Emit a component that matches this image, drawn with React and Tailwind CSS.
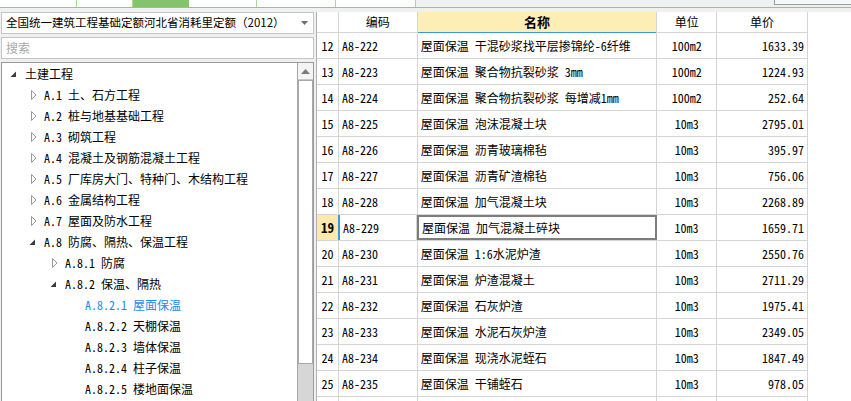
import React from "react";

const rows = [
  [12, "A8-222", "屋面保温 干混砂浆找平层掺锦纶-6纤维", "100m2", "1633.39"],
  [13, "A8-223", "屋面保温 聚合物抗裂砂浆 3mm", "100m2", "1224.93"],
  [14, "A8-224", "屋面保温 聚合物抗裂砂浆 每增减1mm", "100m2", "252.64"],
  [15, "A8-225", "屋面保温 泡沫混凝土块", "10m3", "2795.01"],
  [16, "A8-226", "屋面保温 沥青玻璃棉毡", "10m3", "395.97"],
  [17, "A8-227", "屋面保温 沥青矿渣棉毡", "10m3", "756.06"],
  [18, "A8-228", "屋面保温 加气混凝土块", "10m3", "2268.89"],
  [19, "A8-229", "屋面保温 加气混凝土碎块", "10m3", "1659.71"],
  [20, "A8-230", "屋面保温 1:6水泥炉渣", "10m3", "2550.76"],
  [21, "A8-231", "屋面保温 炉渣混凝土", "10m3", "2711.29"],
  [22, "A8-232", "屋面保温 石灰炉渣", "10m3", "1975.41"],
  [23, "A8-233", "屋面保温 水泥石灰炉渣", "10m3", "2349.05"],
  [24, "A8-234", "屋面保温 现浇水泥蛭石", "10m3", "1847.49"],
  [25, "A8-235", "屋面保温 干铺蛭石", "10m3", "978.05"],
];

const tree = [
  [0, "exp", "土建工程"],
  [1, "col", "A.1 土、石方工程"],
  [1, "col", "A.2 桩与地基基础工程"],
  [1, "col", "A.3 砌筑工程"],
  [1, "col", "A.4 混凝土及钢筋混凝土工程"],
  [1, "col", "A.5 厂库房大门、特种门、木结构工程"],
  [1, "col", "A.6 金属结构工程"],
  [1, "col", "A.7 屋面及防水工程"],
  [1, "exp", "A.8 防腐、隔热、保温工程"],
  [2, "col", "A.8.1 防腐"],
  [2, "exp", "A.8.2 保温、隔热"],
  [3, null, "A.8.2.1 屋面保温", true],
  [3, null, "A.8.2.2 天棚保温"],
  [3, null, "A.8.2.3 墙体保温"],
  [3, null, "A.8.2.4 柱子保温"],
  [3, null, "A.8.2.5 楼地面保温"],
];

const spacer = ["w-[8px]", "w-[27px]", "w-[48px]", "w-[68px]"];

function Icon({ kind }) {
  if (kind === "exp")
    return (
      <svg width="7" height="7" viewBox="0 0 7 7" className="mt-[1px]">
        <polygon points="6,0.5 6,6 0.5,6" fill="#3c3c3c" />
      </svg>
    );
  if (kind === "col")
    return (
      <svg width="7" height="10" viewBox="0 0 7 10" className="ml-[2px]">
        <polygon points="0.5,0.5 5,5 0.5,9.5" fill="#fff" stroke="#9a9a9a" strokeWidth="1" />
      </svg>
    );
  return null;
}

export default function App() {
  return (
    <div className="w-[851px] h-[401px] overflow-hidden bg-[#f0f0f0] flex flex-col font-['Noto_Sans_Mono_CJK_SC','Noto_Sans_CJK_SC',sans-serif] text-[12px] text-black">
      {/* top tab strip */}
      <div className="h-[8px] flex border-b border-[#8ccb78] shrink-0">
        <div className="w-[77px] bg-white border-r border-[#a6d896]" />
        <div className="w-[56px] bg-white border-r border-[#a6d896]" />
        <div className="w-[56px] bg-[#84c46c]" />
        <div className="w-[68px] bg-white border-r border-[#a6d896]" />
        <div className="w-[79px] bg-white border-r border-[#a6d896]" />
        <div className="w-[80px] bg-white border-r border-[#a6d896]" />
        <div className="flex-1 bg-[#f0f0f0] relative">
          <div className="absolute left-[358px] top-0 right-0 h-[5px] border-l border-b border-[#9c9c9c] bg-[#f6f6f6]" />
        </div>
      </div>

      <div className="flex flex-1 pt-[4px] min-h-0">
        {/* left panel */}
        <div className="w-[313px] ml-[1px] flex flex-col gap-[3px] min-h-0">
          <div className="h-[22px] shrink-0 bg-white border border-[#c4c4c4] flex items-center pl-[4px] pr-[5px]">
            <span className="flex-1 text-[11.5px] font-['Noto_Sans_CJK_SC',sans-serif] whitespace-nowrap">
              全国统一建筑工程基础定额河北省消耗里定额（2012）
            </span>
            <svg width="7" height="4" viewBox="0 0 7 4">
              <polygon points="0,0 7,0 3.5,4" fill="#6d6d6d" />
            </svg>
          </div>
          <div className="h-[22px] shrink-0 bg-white border border-[#c4c4c4] flex items-center pl-[4px] text-[#a9a9a9] font-['Noto_Sans_CJK_SC',sans-serif]">
            搜索
          </div>
          <div className="flex-1 bg-white border border-[#9a9a9a] border-b-0 flex min-h-0">
            <div className="flex-1 flex flex-col">
              {tree.map(([lvl, kind, label, sel], i) => (
                <div key={i} className="h-[21px] flex items-center shrink-0 whitespace-nowrap">
                  <div className={spacer[lvl]} />
                  <div className="w-[15px] flex items-center">
                    <Icon kind={kind} />
                  </div>
                  <span className={sel ? "text-[#1a8cf0]" : ""}>{label}</span>
                </div>
              ))}
            </div>
            <div className="w-[16px] border-l border-[#a8a8a8] flex flex-col bg-[#d6d6d6]">
              <div className="h-[17px] bg-[#f4f4f4] border-b border-[#c8c8c8] flex items-center justify-center">
                <svg width="9" height="5" viewBox="0 0 9 5">
                  <polygon points="4.5,0 9,5 0,5" fill="#7a7a7a" />
                </svg>
              </div>
              <div className="h-[284px] bg-white border border-[#a9a9a9] shrink-0" />
            </div>
          </div>
        </div>

        {/* right table */}
        <div className="ml-[2px] flex-1 bg-white border-l border-[#b0b0b0] min-h-0 overflow-hidden">
          <div className="flex flex-col w-[491px]">
            <div className="flex h-[21px] shrink-0 border-b border-[#d4d4d4]">
              <div className="w-[22px] border-r border-[#d4d4d4]" />
              <div className="w-[79px] border-r border-[#d4d4d4] flex items-center justify-center font-['Noto_Sans_CJK_SC',sans-serif]">
                编码
              </div>
              <div className="w-[240px] border-r border-[#d4d4d4] bg-[#fdeeb5] flex flex-col">
                <div className="flex-1 flex items-center justify-center font-bold text-[13px] font-['Noto_Sans_CJK_SC',sans-serif]">
                  名称
                </div>
                <div className="h-[2px] bg-[#3a9ad8]" />
              </div>
              <div className="w-[60px] border-r border-[#d4d4d4] flex items-center justify-center font-['Noto_Sans_CJK_SC',sans-serif]">
                单位
              </div>
              <div className="w-[91px] border-r border-[#d4d4d4] flex items-center justify-center font-['Noto_Sans_CJK_SC',sans-serif]">
                单价
              </div>
            </div>
            {rows.map(([n, code, name, unit, price]) => {
              const sel = n === 19;
              return (
                <div key={n} className="flex h-[26px] shrink-0 border-b border-[#d4d4d4]">
                  <div
                    className={
                      "w-[22px] border-r border-[#d4d4d4] flex items-center justify-center " +
                      (sel ? "bg-[#fde9ad] font-bold text-[13px]" : "")
                    }
                  >
                    {n}
                  </div>
                  <div
                    className={
                      "w-[79px] border-r border-[#d4d4d4] flex items-center pl-[3px] " +
                      (sel ? "border-l-2 border-l-[#3a9ad8] -ml-[1px] pl-[2px]" : "")
                    }
                  >
                    {code}
                  </div>
                  <div
                    className={
                      "w-[240px] flex items-center pl-[3px] whitespace-nowrap overflow-hidden " +
                      (sel ? "border-2 border-[#7d7d7d] pl-[2px]" : "border-r border-[#d4d4d4]")
                    }
                  >
                    {name}
                  </div>
                  <div className="w-[60px] border-r border-[#d4d4d4] flex items-center justify-center">
                    {unit}
                  </div>
                  <div className="w-[91px] border-r border-[#d4d4d4] flex items-center justify-end pr-[3px]">
                    {price}
                  </div>
                </div>
              );
            })}
            <div className="flex h-[26px] shrink-0">
              <div className="w-[22px] border-r border-[#d4d4d4]" />
              <div className="w-[79px] border-r border-[#d4d4d4]" />
              <div className="w-[240px] border-r border-[#d4d4d4]" />
              <div className="w-[60px] border-r border-[#d4d4d4]" />
              <div className="w-[91px] border-r border-[#d4d4d4]" />
            </div>
          </div>
        </div>
      </div>
    </div>
  );
}
